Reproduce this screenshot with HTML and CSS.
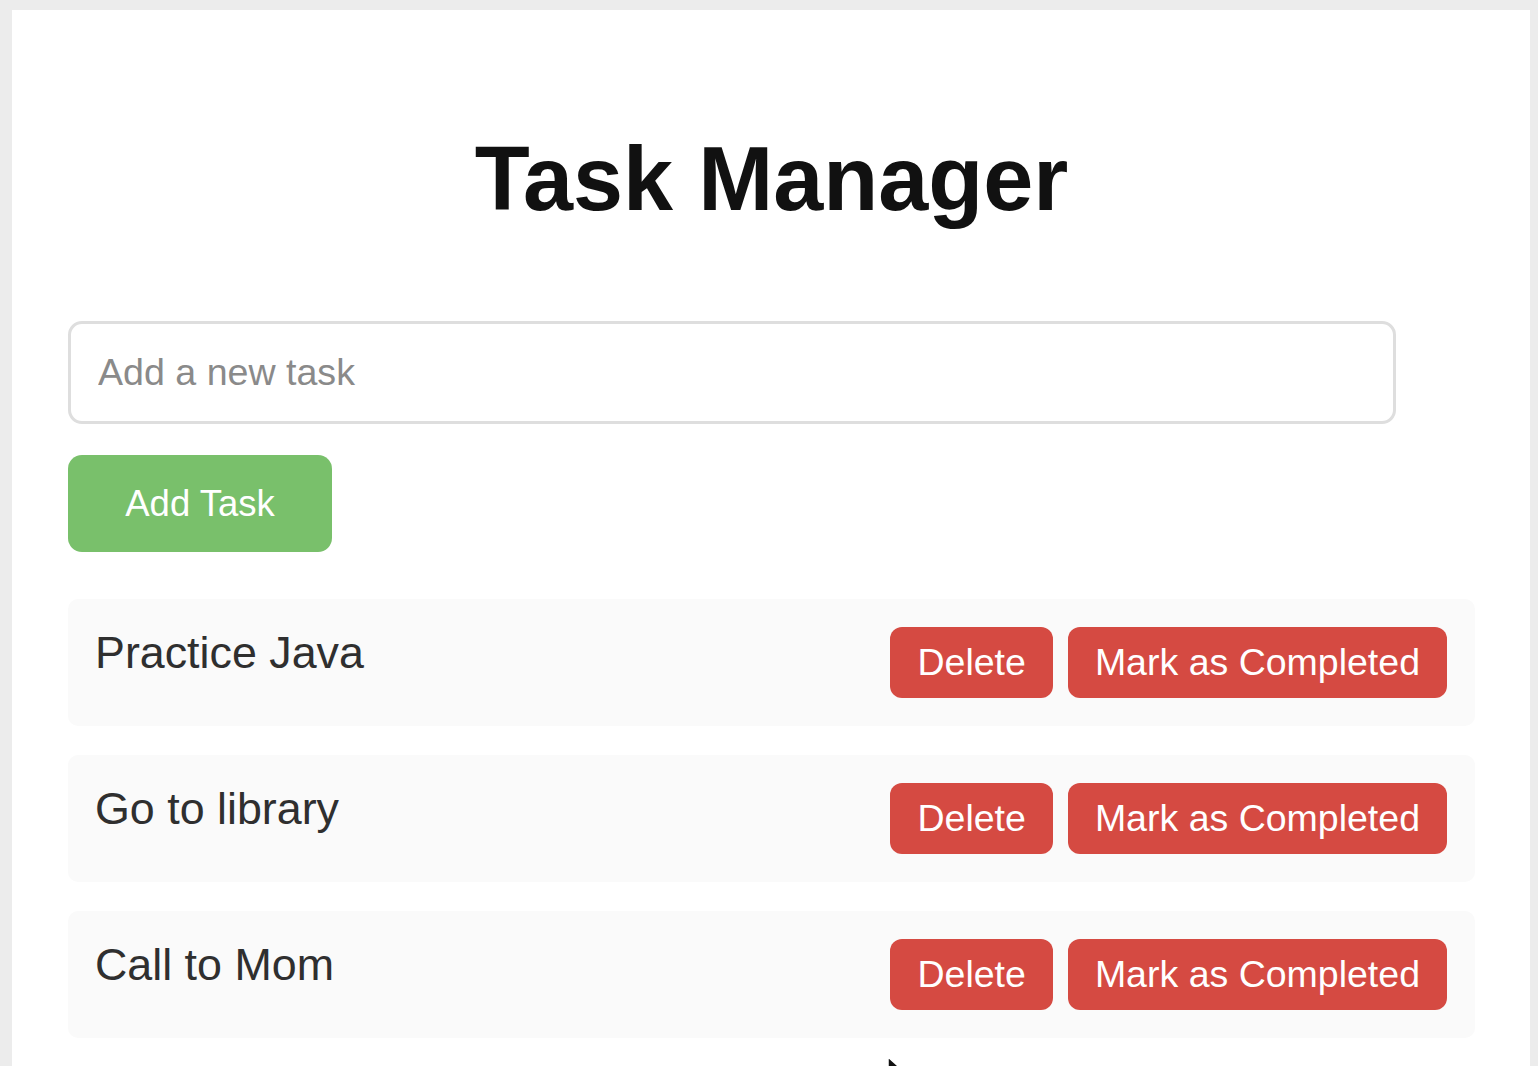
FILE: index.html
```html
<!DOCTYPE html>
<html lang="en">
<head>
<meta charset="utf-8">
<title>Task Manager</title>
<link rel="stylesheet" href="styles.css">
</head>
<body>
<div class="container">
  <h1 class="title">Task Manager</h1>
  <input class="task-input" type="text" placeholder="Add a new task">
  <button class="add-btn">Add Task</button>
  <ul class="task-list">
    <li class="task">
      <span class="task-text">Practice Java</span>
      <div class="actions">
        <button class="btn">Delete</button>
        <button class="btn">Mark as Completed</button>
      </div>
    </li>
    <li class="task">
      <span class="task-text">Go to library</span>
      <div class="actions">
        <button class="btn">Delete</button>
        <button class="btn">Mark as Completed</button>
      </div>
    </li>
    <li class="task">
      <span class="task-text">Call to Mom</span>
      <div class="actions">
        <button class="btn">Delete</button>
        <button class="btn">Mark as Completed</button>
      </div>
    </li>
  </ul>
  <svg class="cursor" width="22" height="30" viewBox="0 0 22 30"><path d="M1 1 L1 24 L7 18 L11 28 L15 26 L11 17 L19 17 Z" fill="#111" stroke="#fff" stroke-width="1.5"/></svg>
</div>
</body>
</html>
```

FILE: styles.css
```css
html, body {
  margin: 0;
  padding: 0;
  height: 100%;
  overflow: hidden;
}
body {
  background: #ececec;
  font-family: "Liberation Sans", Arial, sans-serif;
  padding: 10px 8px 0 12px;
  box-sizing: border-box;
}
.container {
  position: relative;
  background: #fff;
  height: 1200px;
  padding: 118px 55px 0 56px;
  box-sizing: border-box;
}
.title {
  margin: 0;
  text-align: center;
  font-size: 90px;
  font-weight: bold;
  line-height: 103px;
  color: #111;
}
.task-input {
  display: block;
  margin-top: 90px;
  width: 1328px;
  height: 103px;
  box-sizing: border-box;
  border: 3px solid #dedede;
  border-radius: 14px;
  padding: 0 27px;
  font-family: "Liberation Sans", Arial, sans-serif;
  font-size: 37.6px;
  color: #333;
  outline: none;
}
.task-input::placeholder {
  color: #8a8a8a;
}
.add-btn {
  display: block;
  margin-top: 31px;
  width: 264px;
  height: 97px;
  border: none;
  border-radius: 14px;
  background: #79c06b;
  color: #fff;
  font-family: "Liberation Sans", Arial, sans-serif;
  font-size: 36.5px;
  padding: 0;
}
.task-list {
  list-style: none;
  margin: 47px 0 0;
  padding: 0;
  display: flex;
  flex-direction: column;
  gap: 29px;
}
.task {
  background: #fafafa;
  border-radius: 10px;
  padding: 28px 28px 28px 27px;
  display: flex;
  justify-content: space-between;
  align-items: flex-start;
}
.task-text {
  font-size: 44.8px;
  color: #2f2f2f;
  line-height: 52px;
  margin-top: -1px;
}
.actions {
  display: flex;
  gap: 15px;
}
.btn {
  height: 71px;
  border: none;
  border-radius: 12px;
  background: #d54a42;
  color: #fff;
  font-family: "Liberation Sans", Arial, sans-serif;
  font-size: 37.5px;
  padding: 0 27px;
}
.cursor {
  position: absolute;
  left: 875px;
  top: 1046px;
}
```
